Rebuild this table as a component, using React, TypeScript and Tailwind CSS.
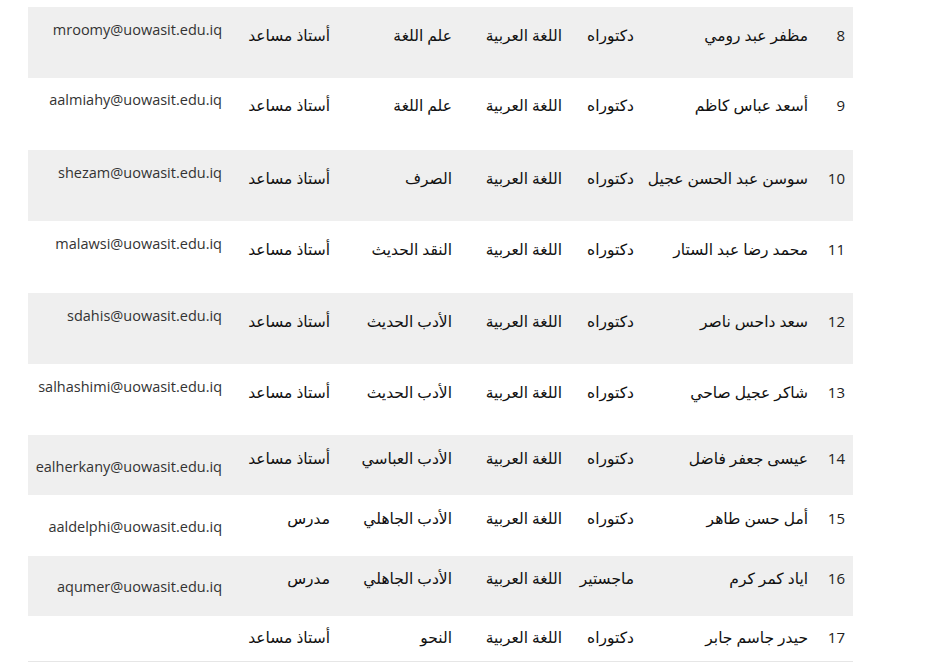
const rows = [
  { n: 8, name: "مظفر عبد رومي", deg: "دكتوراه", spec: "اللغة العربية", sub: "علم اللغة", title: "أستاذ مساعد", email: "mroomy@uowasit.edu.iq", h: "h-[71px]", pt: "pt-4", ept: "pt-[11px]" },
  { n: 9, name: "أسعد عباس كاظم", deg: "دكتوراه", spec: "اللغة العربية", sub: "علم اللغة", title: "أستاذ مساعد", email: "aalmiahy@uowasit.edu.iq", h: "h-[72px]", pt: "pt-[15px]", ept: "pt-[10px]" },
  { n: 10, name: "سوسن عبد الحسن عجيل", deg: "دكتوراه", spec: "اللغة العربية", sub: "الصرف", title: "أستاذ مساعد", email: "shezam@uowasit.edu.iq", h: "h-[71px]", pt: "pt-4", ept: "pt-[11px]" },
  { n: 11, name: "محمد رضا عبد الستار", deg: "دكتوراه", spec: "اللغة العربية", sub: "النقد الحديث", title: "أستاذ مساعد", email: "malawsi@uowasit.edu.iq", h: "h-[72px]", pt: "pt-4", ept: "pt-[11px]" },
  { n: 12, name: "سعد داحس ناصر", deg: "دكتوراه", spec: "اللغة العربية", sub: "الأدب الحديث", title: "أستاذ مساعد", email: "sdahis@uowasit.edu.iq", h: "h-[71px]", pt: "pt-4", ept: "pt-[11px]" },
  { n: 13, name: "شاكر عجيل صاحي", deg: "دكتوراه", spec: "اللغة العربية", sub: "الأدب الحديث", title: "أستاذ مساعد", email: "salhashimi@uowasit.edu.iq", h: "h-[71px]", pt: "pt-4", ept: "pt-[11px]" },
  { n: 14, name: "عيسى جعفر فاضل", deg: "دكتوراه", spec: "اللغة العربية", sub: "الأدب العباسي", title: "أستاذ مساعد", email: "ealherkany@uowasit.edu.iq", h: "h-[60px]", pt: "pt-[11px]", ept: "pt-5" },
  { n: 15, name: "أمل حسن طاهر", deg: "دكتوراه", spec: "اللغة العربية", sub: "الأدب الجاهلي", title: "مدرس", email: "aaldelphi@uowasit.edu.iq", h: "h-[61px]", pt: "pt-[11px]", ept: "pt-5" },
  { n: 16, name: "اياد كمر كرم", deg: "ماجستير", spec: "اللغة العربية", sub: "الأدب الجاهلي", title: "مدرس", email: "aqumer@uowasit.edu.iq", h: "h-[60px]", pt: "pt-[10px]", ept: "pt-[19px]" },
  { n: 17, name: "حيدر جاسم جابر", deg: "دكتوراه", spec: "اللغة العربية", sub: "النحو", title: "أستاذ مساعد", email: "", h: "h-[46px]", pt: "pt-[9px]", ept: "pt-[9px]" },
];

export default function App() {
  return (
    <div className="min-h-[664px] bg-white pt-[7px] pl-[28px] font-['Open_Sans','DejaVu_Sans',sans-serif] text-[15px] leading-6 text-[#222]">
      <div dir="rtl" className="w-[825px]">
        {rows.map((r, i) => (
          <div
            key={r.n}
            className={`grid grid-cols-[37px_174px_72px_110px_122px_108px_202px] whitespace-nowrap ${r.h} ${i % 2 === 0 ? "bg-[#efefef]" : "bg-white"} ${r.n === 17 ? "border-b border-[#e6e6e6]" : ""}`}
          >
            <div className={`pr-2 ${r.pt} font-medium`}>{r.n}</div>
            <div className={`pr-2 ${r.pt} text-[15.5px] text-[#111]`}>{r.name}</div>
            <div className={`pr-2 ${r.pt} text-[15.5px] text-[#111]`}>{r.deg}</div>
            <div className={`pr-2 ${r.pt} text-[15.5px] text-[#111]`}>{r.spec}</div>
            <div className={`pr-2 ${r.pt} text-[15.5px] text-[#111]`}>{r.sub}</div>
            <div className={`pr-2 ${r.pt} text-[15.5px] text-[#111]`}>{r.title}</div>
            <div className={`pr-2 ${r.ept} text-[14.5px] text-[#333]`}>{r.email}</div>
          </div>
        ))}
      </div>
    </div>
  );
}
